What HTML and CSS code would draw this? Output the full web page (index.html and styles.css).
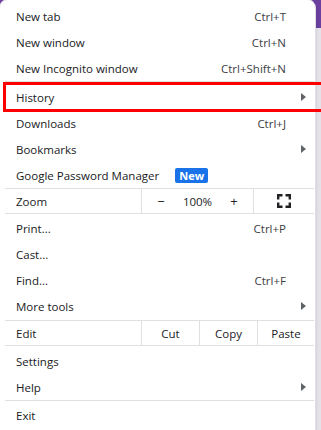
FILE: index.html
```html
<!DOCTYPE html>
<html lang="en">
<head>
<meta charset="utf-8">
<title>Menu</title>
<link rel="stylesheet" href="styles.css">
</head>
<body>
<div class="menu">
  <div class="item"><span class="label">New tab</span><span class="kbd">Ctrl+T</span></div>
  <div class="item"><span class="label">New window</span><span class="kbd">Ctrl+N</span></div>
  <div class="item"><span class="label">New Incognito window</span><span class="kbd">Ctrl+Shift+N</span></div>
  <div class="sep"></div>
  <div class="item sub highlight"><span class="label">History</span><span class="arrow"></span></div>
  <div class="item"><span class="label">Downloads</span><span class="kbd">Ctrl+J</span></div>
  <div class="item sub"><span class="label">Bookmarks</span><span class="arrow"></span></div>
  <div class="item start"><span class="label">Google Password Manager</span><span class="badge">New</span></div>
  <div class="split zoom">
    <div class="cell name">Zoom</div>
    <div class="cell zctl"><span class="zb">&minus;</span><span class="zv">100%</span><span class="zb">+</span></div>
    <div class="cell fs">
      <svg width="14" height="14" viewBox="0 0 14 14" aria-hidden="true"><path d="M1.2 5.5V1.2h4.3M8.5 1.2h4.3v4.3M12.8 8.5v4.3H8.5M5.5 12.8H1.2V8.5" fill="none" stroke="#202124" stroke-width="2.4"/></svg>
    </div>
  </div>
  <div class="item"><span class="label">Print...</span><span class="kbd">Ctrl+P</span></div>
  <div class="item"><span class="label">Cast...</span></div>
  <div class="item"><span class="label">Find...</span><span class="kbd">Ctrl+F</span></div>
  <div class="item sub"><span class="label">More tools</span><span class="arrow"></span></div>
  <div class="split edit">
    <div class="cell name">Edit</div>
    <div class="cell c">Cut</div>
    <div class="cell c">Copy</div>
    <div class="cell c">Paste</div>
  </div>
  <div class="item"><span class="label">Settings</span></div>
  <div class="item sub"><span class="label">Help</span><span class="arrow"></span></div>
  <div class="sep tight"></div>
  <div class="item"><span class="label">Exit</span></div>
</div>
</body>
</html>
```

FILE: styles.css
```css
html, body {
  margin: 0;
  padding: 0;
}
body {
  width: 321px;
  height: 430px;
  overflow: hidden;
  background: linear-gradient(#6b3fa0 0, #6b3fa0 28px, #e4e1e8 28px);
  font-family: "Open Sans", "Noto Sans", sans-serif;
  font-size: 11.5px;
  color: #202124;
}
.menu {
  width: 315px;
  height: 440px;
  box-sizing: border-box;
  background: #fff;
  border-radius: 8px;
  padding-top: 3px;
  box-shadow: 0 0 0 1px #e2dee8, 1px 1px 3px rgba(0,0,0,0.12);
}
.item {
  height: 26px;
  display: flex;
  align-items: center;
  justify-content: space-between;
  padding: 0 29px 0 16px;
  position: relative;
}
.item.sub {
  padding-right: 9px;
}
.item.start {
  justify-content: flex-start;
}
.kbd {
  color: #3c4043;
}
.arrow {
  width: 0;
  height: 0;
  border-left: 5px solid #5f6368;
  border-top: 4px solid transparent;
  border-bottom: 4px solid transparent;
}
.badge {
  margin-left: 16px;
  background: #1a73e8;
  color: #fff;
  font-weight: 700;
  font-size: 11px;
  line-height: 15px;
  height: 15px;
  padding: 0 4px;
  border-radius: 2px;
}
.highlight::after {
  content: "";
  position: absolute;
  left: 3px;
  right: -6px;
  top: -2px;
  bottom: -2px;
  border: 3px solid #f00;
  border-right: 0;
}
.sep {
  height: 1px;
  background: #e0e0e0;
  margin: 0 1px 2px 5px;
}
.sep.tight {
  margin-bottom: 1px;
}
.split {
  display: flex;
  height: 24px;
  border-top: 1px solid #e0e0e0;
  border-bottom: 1px solid #e0e0e0;
  margin: 0 1px 0 5px;
}
.split.zoom {
  margin-bottom: 1px;
}
.split.edit {
  margin-top: 1px;
  margin-bottom: 2px;
}
.cell {
  display: flex;
  align-items: center;
  box-sizing: border-box;
}
.cell + .cell {
  border-left: 1px solid #e0e0e0;
}
.cell.name {
  width: 136px;
  padding-left: 11px;
}
.zctl {
  width: 112px;
  display: grid;
  grid-template-columns: 38px 1fr 38px;
  text-align: center;
}
.zb {
  font-size: 13px;
}
.fs {
  flex: 1;
  justify-content: center;
}
.edit .c {
  width: 58px;
  justify-content: center;
}
.edit .c:last-child {
  flex: 1;
  width: auto;
}
```
